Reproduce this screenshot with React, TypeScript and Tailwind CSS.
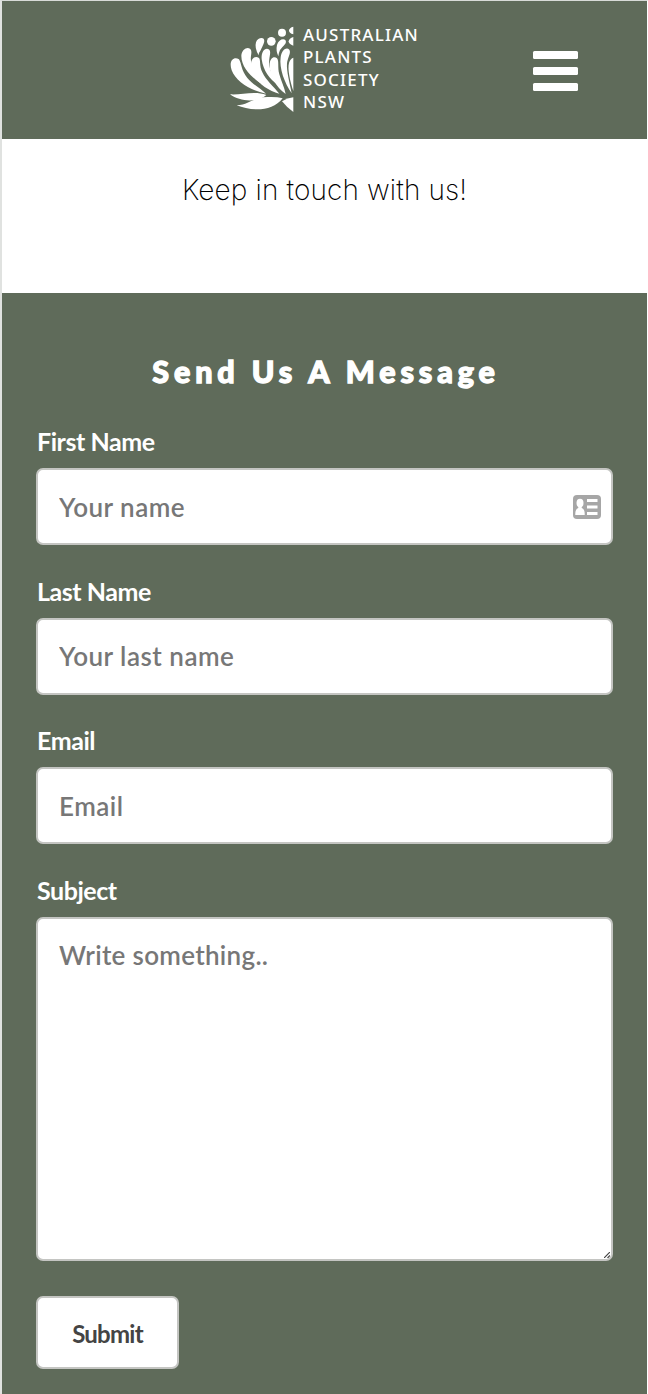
import type { ReactNode } from "react";

function PlantMark() {
  return (
    <svg className="h-[98px] w-[75px] shrink-0" viewBox="0 0 225 294" fill="#fff" aria-hidden="true">
      <circle cx="171" cy="38" r="12" />
      <circle cx="139" cy="64" r="13" />
      <path d="M205 20V43Q192 40 192 31Q193 23 205 20Z" />
      <path d="M205 51V77Q191 72 191 64Q192 55 205 51Z" />
      <path d="M116 56C122 65 112 78 107 91Q101 98 101 106Q88 84 93 67C97 55 110 52 116 56Z" />
      <path d="M181 60C188 70 173 79 165 90Q161 99 160 109Q152 92 156 75C160 59 175 54 181 60Z" />
      <path d="M75 86C84 94 75 108 78 122C82 152 95 171 107 190C80 171 49 143 49 107C50 89 66 79 75 86Z" />
      <path d="M42 118C50 130 48 151 67 174C81 192 106 205 123 221C76 212 33 185 20 151C10 121 27 109 42 118Z" />
      <path d="M102 114C108 122 102 137 112 157C123 181 145 199 163 221C125 211 88 184 79 145C74 117 89 105 102 114Z" />
      <path d="M133 89C140 99 130 112 133 136C137 160 150 178 158 195C134 177 115 153 110 118C108 91 123 80 133 89Z" />
      <path d="M156 115C163 123 157 142 163 163C169 185 178 201 182 222C154 202 134 168 134 135C134 113 148 107 156 115Z" />
      <path d="M193 89C199 99 188 112 186 130C184 154 194 188 200 220C179 190 162 145 167 112C170 91 184 80 193 89Z" />
      <path d="M205 113V213C195 184 187 146 192 129Q195 117 205 113Z" />
      <path d="M15 223C47 226 89 211 124 225C98 248 46 246 15 223Z" />
      <path d="M35 256C77 253 85 230 130 231Q156 230 173 235C142 277 77 273 35 256Z" />
      <path d="M205 232V276Q186 263 171 244Q187 234 205 232Z" />
    </svg>
  );
}

function Header() {
  return (
    <header className="flex h-[138px] items-start bg-[#5f6b5a] pl-[223px]">
      <div className="mt-[19px] flex">
        <PlantMark />
        <div className="mt-[4px] ml-[3px] w-[140px] font-['Noto_Sans',sans-serif] text-[17px] leading-[22.3px] font-medium tracking-[1.2px] whitespace-nowrap text-white">
          AUSTRALIAN
          <br />
          PLANTS
          <br />
          SOCIETY
          <br />
          NSW
        </div>
      </div>
      <button className="mt-[50px] ml-[90px] flex flex-col gap-[8.5px]" aria-label="Menu">
        <span className="h-[7.5px] w-[45px] rounded-[1.5px] bg-white" />
        <span className="h-[7.5px] w-[45px] rounded-[1.5px] bg-white" />
        <span className="h-[7.5px] w-[45px] rounded-[1.5px] bg-white" />
      </button>
    </header>
  );
}

function ContactCard() {
  return (
    <svg className="h-[24px] w-[28px]" viewBox="0 0 28 24" aria-hidden="true">
      <rect width="28" height="24" rx="4" fill="#a6a6a6" />
      <g fill="#fff">
        <ellipse cx="7" cy="8" rx="3.5" ry="4.3" />
        <path d="M5.3 11H8.7V13Q12 14 11.7 20H2.3Q2 14 5.3 13Z" />
        <rect x="14" y="4" width="10.5" height="3" />
        <rect x="14" y="10.5" width="10.5" height="3" />
        <rect x="14" y="17" width="10.5" height="3" />
      </g>
    </svg>
  );
}

function Field({ label, children }: { label: string; children: ReactNode }) {
  return (
    <label className="block pb-[22.5px]">
      <span className="block h-[50px] pt-[8px] pl-px text-[25px] leading-[30px] font-bold tracking-[-0.45px] text-white">{label}</span>
      {children}
    </label>
  );
}

const control =
  "block w-full rounded-[7px] border-2 border-[#c4c5c2] bg-white px-[21px] text-[26px] font-semibold tracking-[0.5px] text-[#444] outline-none placeholder:text-[#777]";

export default function App() {
  return (
    <div className="flex h-[1394px] w-[648px] flex-col overflow-hidden border-t border-r border-l-2 border-t-[#d8dbd8] border-r-white border-l-[#e0e2e0] bg-white font-[Lato,sans-serif]">
      <Header />
      <section className="h-[154px] pt-[33px] text-center font-[Inter,sans-serif] text-[28px] leading-[36px] font-extralight tracking-[0.12px] text-black">
        Keep in touch with us!
      </section>
      <main className="flex-1 bg-[#5f6b5a] pr-[34px] pl-[34px]">
        <h1 className="pt-[58px] pb-[30px] pl-[3px] text-center text-[30.5px] leading-[40px] font-black tracking-[4.9px] text-white [-webkit-text-stroke:1.3px_white]">
          Send Us A Message
        </h1>
        <form className="-mt-[3.2px]">
          <Field label="First Name">
            <div className="relative">
              <input className={`${control} h-[77.5px]`} placeholder="Your name" />
              <div className="absolute top-[27.5px] right-[12px]">
                <ContactCard />
              </div>
            </div>
          </Field>
          <Field label="Last Name">
            <input className={`${control} h-[77px]`} placeholder="Your last name" />
          </Field>
          <Field label="Email">
            <input className={`${control} h-[77px]`} placeholder="Email" />
          </Field>
          <Field label="Subject">
            <div className="relative">
              <textarea className={`${control} h-[344px] resize-none pt-[19px] leading-[34px] placeholder:tracking-[0.3px]`} placeholder="Write something.." />
              <svg className="absolute right-[3px] bottom-[3px] h-[6px] w-[6px]" viewBox="0 0 6 6" stroke="#444" strokeWidth="1.2" aria-hidden="true">
                <path d="M0 6L6 0M3.5 6L6 3.5" />
              </svg>
            </div>
          </Field>
          <button type="button" className="mt-[12.2px] h-[73px] w-[143px] rounded-[7px] border-2 border-[#c4c5c2] bg-white pt-[3px] text-[24px] font-bold tracking-[-0.75px] text-[#444]">
            Submit
          </button>
        </form>
      </main>
    </div>
  );
}
